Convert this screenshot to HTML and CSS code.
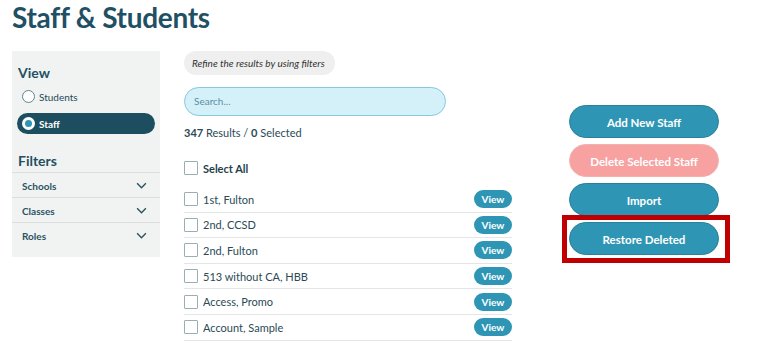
FILE: index.html
```html
<!DOCTYPE html>
<html lang="en">
<head>
  <meta charset="UTF-8">
  <meta name="viewport" content="width=device-width, initial-scale=1.0">
  <title>Staff &amp; Students</title>
  <link rel="stylesheet" href="styles.css">
</head>
<body>
  <h1 class="title">Staff &amp; Students</h1>
  <div class="page">
    <div class="aside">
      <h2 class="aside-head">View</h2>
      <label class="radio">
        <span class="dot"></span>Students
      </label>
      <label class="radio checked">
        <span class="dot"></span>Staff
      </label>
      <h2 class="aside-head filters-head">Filters</h2>
      <ul class="filters">
        <li>Schools <svg class="chev" viewBox="0 0 12 8"><path d="M1 1.5l5 5 5-5"/></svg></li>
        <li>Classes <svg class="chev" viewBox="0 0 12 8"><path d="M1 1.5l5 5 5-5"/></svg></li>
        <li>Roles <svg class="chev" viewBox="0 0 12 8"><path d="M1 1.5l5 5 5-5"/></svg></li>
      </ul>
    </div>

    <div class="main">
      <div class="hint">Refine the results by using filters</div>
      <div class="search">Search...</div>
      <div class="count"><b>347</b> Results / <b>0</b> Selected</div>
      <label class="select-all"><span class="box"></span>Select All</label>
      <ul class="list">
        <li><span class="box"></span><span class="name">1st, Fulton</span><span class="view">View</span></li>
        <li><span class="box"></span><span class="name">2nd, CCSD</span><span class="view">View</span></li>
        <li><span class="box"></span><span class="name">2nd, Fulton</span><span class="view">View</span></li>
        <li><span class="box"></span><span class="name">513 without CA, HBB</span><span class="view">View</span></li>
        <li><span class="box"></span><span class="name">Access, Promo</span><span class="view">View</span></li>
        <li><span class="box"></span><span class="name">Account, Sample</span><span class="view">View</span></li>
      </ul>
    </div>

    <div class="actions">
      <div class="btn">Add New Staff</div>
      <div class="btn btn-danger">Delete Selected Staff</div>
      <div class="btn">Import</div>
      <div class="btn highlight">Restore Deleted</div>
    </div>
  </div>
</body>
</html>
```

FILE: styles.css
```css
* {
  margin: 0;
  padding: 0;
  box-sizing: border-box;
}

html,
body {
  width: 100%;
  height: 100%;
  overflow: hidden;
}

body {
  font-family: Lato, "Open Sans", sans-serif;
  background-color: #fff;
  color: #1f4a58;
}

ul {
  list-style: none;
}

.title {
  font-size: 28px;
  font-weight: 700;
  color: #1f5064;
  line-height: 34px;
  padding-left: 12px;
  height: 51px;
  letter-spacing: -0.3px;
}

.page {
  display: flex;
  align-items: flex-start;
  padding-left: 12px;
}

/* 左侧栏 */
.aside {
  width: 148px;
  height: 206px;
  background-color: #f1f3f2;
  padding-top: 13px;
}

.aside-head {
  font-size: 14px;
  font-weight: 700;
  color: #1f5064;
  line-height: 17px;
  padding-left: 6px;
}

.radio {
  display: flex;
  align-items: center;
  height: 21px;
  margin: 5px 5px 0 5px;
  padding-left: 5px;
  font-size: 10px;
  color: #1f4a58;
}

.radio .dot {
  width: 13px;
  height: 13px;
  border-radius: 50%;
  border: 1px solid #5e8490;
  background-color: #fff;
  margin-right: 4px;
}

.radio.checked {
  margin-top: 6px;
  background-color: #1d4e60;
  border-radius: 11px;
  color: #fff;
  font-weight: 700;
}

.radio.checked .dot {
  border: 3px solid #fff;
  background-color: #2e96b4;
}

.filters-head {
  margin-top: 18px;
  padding-bottom: 3px;
}

.filters li {
  display: flex;
  align-items: center;
  justify-content: space-between;
  height: 25px;
  border-top: 1.5px solid #dcdedd;
  padding: 1px 13px 0 10px;
  font-size: 10px;
  font-weight: 700;
  color: #2b5361;
}

.chev {
  width: 11px;
  height: 7px;
  fill: none;
  stroke: #2b5361;
  stroke-width: 1.6;
}

/* 中间列表 */
.main {
  width: 328px;
  margin-left: 24px;
}

.hint {
  width: 151px;
  height: 24px;
  line-height: 24px;
  padding: 0 8px;
  background-color: #efefef;
  border-radius: 12px;
  font-size: 10px;
  font-style: italic;
  color: #333;
  white-space: nowrap;
}

.search {
  width: 262px;
  height: 29px;
  margin-top: 12px;
  border: 1px solid #86c9dd;
  background-color: #d4f1fa;
  border-radius: 15px;
  padding-left: 9px;
  line-height: 27px;
  font-size: 10px;
  color: #5d8ea5;
}

.count {
  margin-top: 9px;
  font-size: 11px;
  line-height: 16px;
  color: #2b4a55;
}

.box {
  width: 14px;
  height: 14px;
  border: 1.5px solid #9aaeb4;
  border-radius: 1px;
  background-color: #fff;
  margin-right: 5px;
  flex-shrink: 0;
}

.select-all {
  display: flex;
  align-items: center;
  margin-top: 20px;
  height: 14px;
  font-size: 11px;
  font-weight: 700;
  color: #1f3f4a;
}

.list {
  margin-top: 12px;
}

.list li {
  display: flex;
  align-items: center;
  height: 25.6px;
  border-bottom: 1.5px solid #e4e6e6;
  font-size: 11px;
  color: #2b4a55;
}

.list .name {
  flex: 1;
}

.view {
  width: 38px;
  height: 18px;
  line-height: 18px;
  border-radius: 9px;
  background-color: #2e96b4;
  color: #fff;
  font-size: 10px;
  font-weight: 700;
  text-align: center;
}

/* 右侧按钮 */
.actions {
  width: 150px;
  margin-left: 57px;
  margin-top: 54px;
  display: flex;
  flex-direction: column;
  gap: 6px;
}

.btn {
  height: 33px;
  line-height: 33px;
  border-radius: 17px;
  background-color: #2e96b4;
  color: #fff;
  font-size: 11.5px;
  font-weight: 700;
  text-align: center;
  border: 1px solid #2a7f99;
}

.btn-danger {
  background-color: #f7a1a1;
  border-color: #f3b0b0;
}

.highlight {
  position: relative;
}

.highlight::after {
  content: "";
  position: absolute;
  left: -8px;
  right: -12px;
  top: -8px;
  bottom: -9px;
  border: 5px solid #c00000;
}
```
